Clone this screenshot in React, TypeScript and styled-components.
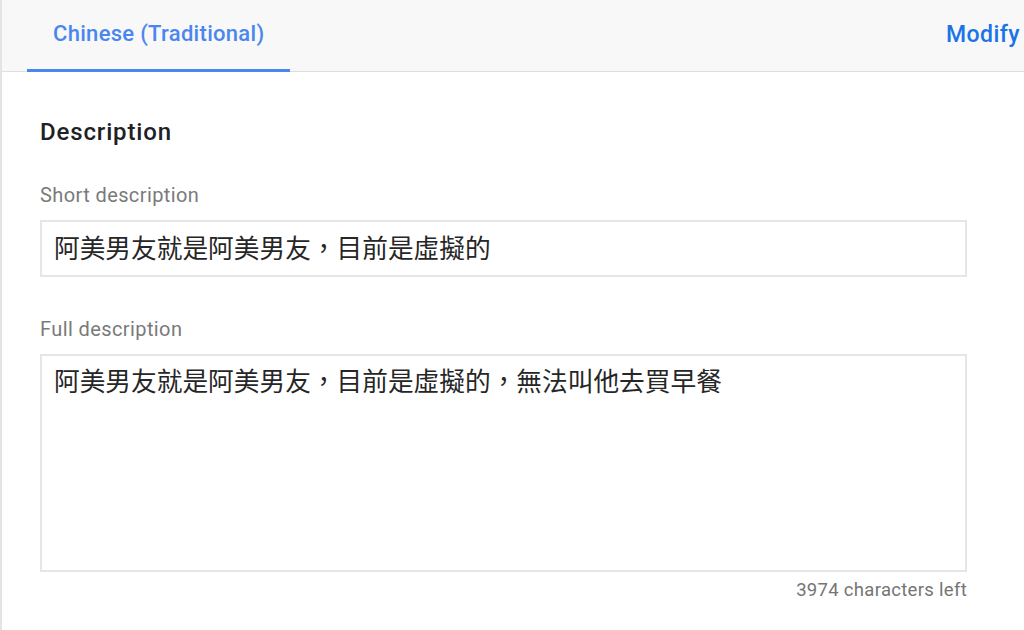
import React from "react";
import styled, { createGlobalStyle } from "styled-components";

const Global = createGlobalStyle`
  html, body { margin: 0; padding: 0; background: #ffffff; }
  body { font-family: Roboto, "Noto Sans CJK TC", sans-serif; }
`;

const Page = styled.div`
  width: 1024px;
  height: 630px;
  box-sizing: border-box;
  border-left: 2px solid #e3e4e6;
  background: #ffffff;
  overflow: hidden;
  display: flex;
  flex-direction: column;
`;

const Header = styled.div`
  height: 72px;
  box-sizing: border-box;
  background: #f8f8f8;
  border-bottom: 1px solid #dedede;
  display: flex;
  align-items: stretch;
  justify-content: space-between;
  padding: 0 4px 0 25px;
`;

const Tab = styled.div<{ $active?: boolean }>`
  display: flex;
  align-items: center;
  padding: 0 26px 2px;
  margin-bottom: -1px;
  font-family: Roboto, sans-serif;
  font-weight: 500;
  font-size: 22px;
  letter-spacing: 0.3px;
  color: #4a86f0;
  border-bottom: 3px solid ${(p) => (p.$active ? "#4a86f0" : "transparent")};
`;

const Action = styled.div`
  display: flex;
  align-items: center;
  padding-bottom: 3px;
  font-family: Roboto, sans-serif;
  font-weight: 500;
  font-size: 23px;
  letter-spacing: 0.45px;
  color: #1a73e8;
`;

const Content = styled.div`
  padding: 44px 0 0 38px;
  width: 927px;
  display: flex;
  flex-direction: column;
`;

const Heading = styled.h2`
  margin: 0;
  font-family: Roboto, sans-serif;
  font-weight: 500;
  font-size: 24px;
  letter-spacing: 0.85px;
  line-height: 32px;
  color: #202124;
`;

const Field = styled.div<{ $top: number }>`
  display: flex;
  flex-direction: column;
  margin-top: ${(p) => p.$top}px;
`;

const Label = styled.div`
  font-family: Roboto, sans-serif;
  font-size: 20px;
  letter-spacing: 0.4px;
  line-height: 24px;
  color: #7a7a7a;
  margin-bottom: 13px;
`;

const Box = styled.div<{ $height: number; $pad: number }>`
  box-sizing: border-box;
  width: 927px;
  height: ${(p) => p.$height}px;
  border: 2px solid #e6e6e6;
  padding: ${(p) => p.$pad}px 12px 0;
  font-family: "Noto Sans CJK TC", "Noto Sans CJK SC", sans-serif;
  font-size: 25.7px;
  line-height: 30px;
  color: #262626;
  white-space: nowrap;
`;

const Counter = styled.div`
  align-self: flex-end;
  margin-top: 6px;
  font-family: Roboto, sans-serif;
  font-size: 18.5px;
  letter-spacing: 0.3px;
  line-height: 24px;
  color: #757575;
`;

export default function App() {
  return (
    <>
      <Global />
      <Page>
        <Header>
          <Tab $active>Chinese (Traditional)</Tab>
          <Action>Modify</Action>
        </Header>
        <Content>
          <Heading>Description</Heading>
          <Field $top={35}>
            <Label>Short description</Label>
            <Box $height={57} $pad={10}>阿美男友就是阿美男友，目前是虛擬的</Box>
          </Field>
          <Field $top={40}>
            <Label>Full description</Label>
            <Box $height={218} $pad={9}>阿美男友就是阿美男友，目前是虛擬的，無法叫他去買早餐</Box>
          </Field>
          <Counter>3974 characters left</Counter>
        </Content>
      </Page>
    </>
  );
}
